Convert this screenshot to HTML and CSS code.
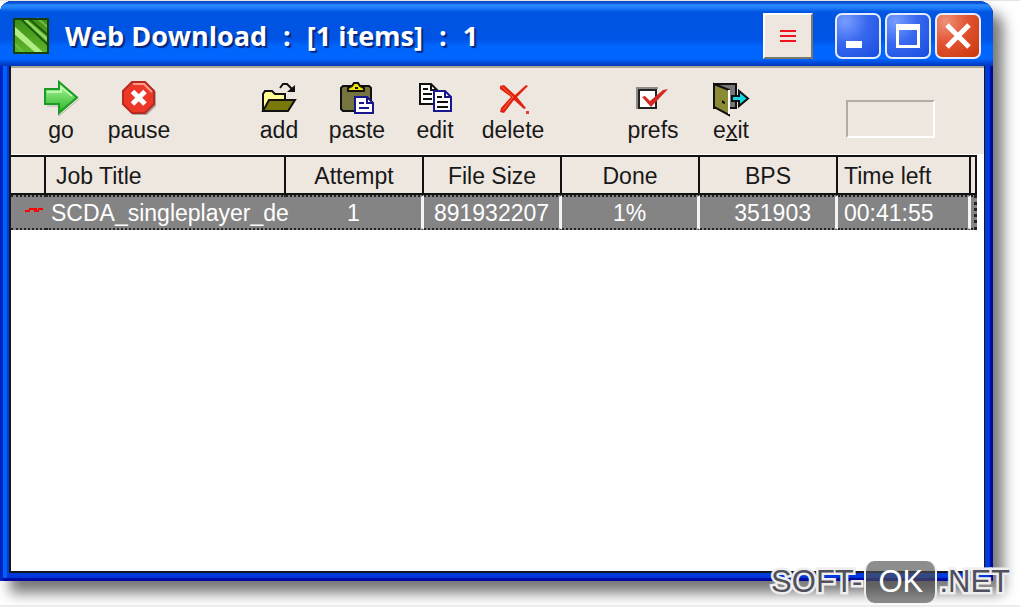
FILE: index.html
```html
<!DOCTYPE html>
<html lang="en">
<head>
<meta charset="utf-8">
<title>Web Download</title>
<link rel="stylesheet" href="styles.css">
</head>

<body>
<main class="window">
    <header class="titlebar">
        <svg class="logo" viewBox="0 0 36 36">
            <defs>
                <linearGradient id="leaf" x2="0" y2="1">
                    <stop offset="0" stop-color="#3c8f17"/>
                    <stop offset="1" stop-color="#5fb52a"/>
                </linearGradient>
            </defs>
            <rect width="36" height="36" fill="url(#leaf)"/>
            <path d="M0 7L32 36H24L0 15Z" fill="#b2ed86"/>
            <path d="M12 0L36 21V25L8 0Z" fill="#8ed860"/>
            <path d="M15 0L36 18M7 0L36 28" stroke="#1d5b08" stroke-width="2"/>
            <path d="M24 0L36 10M0 24L12 36" stroke="#6fbe40" stroke-width="2"/>
            <rect x="1" y="1" width="34" height="34" fill="none" stroke="#163e10" stroke-width="2"/>
        </svg>
        <h1 class="title"><span>Web Download</span> <span>:</span> <span>[1 items]</span> <span>:</span> <span>1</span></h1>
        <button class="menu" aria-label="Menu">
            <svg viewBox="0 0 16 12"><path d="M0 1H16M0 6H16M0 11H16" stroke="#f2141c" stroke-width="2"/></svg>
        </button>
        <div class="controls">
            <button class="control" aria-label="Minimize">
                <svg viewBox="0 0 46 46"><path d="M11 28H27V35H11Z" fill="#fff"/></svg>
            </button>
            <button class="control" aria-label="Maximize">
                <svg viewBox="0 0 46 46"><path d="M11 11H35V35H11ZM14 17V32H32V17Z" fill="#fff" fill-rule="evenodd"/></svg>
            </button>
            <button class="control close" aria-label="Close">
                <svg viewBox="0 0 46 46"><path d="M12 12L34 34M34 12L12 34" stroke="#fff" stroke-width="5"/></svg>
            </button>
        </div>
    </header>

    <section class="content">
        <nav class="toolbar">
            <div class="group">
                <button class="tool">
                    <svg viewBox="0 0 36 36">
                        <defs>
                            <linearGradient id="green" x2="0" y2="1">
                                <stop offset="0" stop-color="#b4f7a4"/>
                                <stop offset="1" stop-color="#25b51e"/>
                            </linearGradient>
                        </defs>
                        <path d="M4 26H16V36L36 19" fill="none" stroke="#b9b5aa" stroke-width="1"/>
                        <path d="M2 9H16V2L34 17.500L16 33V24H2Z" fill="url(#green)" stroke="#199b25" stroke-width="2"/>
                        <path d="M4 12H18V7L29 16" fill="none" stroke="#ccffbd" stroke-width="1.500"/>
                    </svg>
                    go
                </button>
                <button class="tool">
                    <svg viewBox="0 0 36 36">
                        <path d="M12 3H26L35 12V26L26 35H12L3 26V12Z" fill="#aaa59d"/>
                        <path d="M11 2H24L33 11V24L24 33H11L2 24V11Z" fill="#ed3829" stroke="#b62a20" stroke-width="2"/>
                        <path d="M12 4H23L31 12" fill="none" stroke="#ff9b88" stroke-width="2"/>
                        <path d="M11.500 11.500L24 24M24 11.500L11.500 24" stroke="#fff" stroke-width="5"/>
                    </svg>
                    pause
                </button>
            </div>
            <div class="group">
                <button class="tool">
                    <svg viewBox="0 0 36 36">
                        <path d="M2 31V14L4 11H11L14 14H24V19" fill="#fffc91" stroke="#111" stroke-width="2"/>
                        <path d="M2 31L8 20H34L27 31Z" fill="#79780a" stroke="#111" stroke-width="2"/>
                        <path d="M19 8L22 4H26L31 9" fill="none" stroke="#111" stroke-width="2"/>
                        <path d="M34 5V12H26Z" fill="#111"/>
                    </svg>
                    add
                </button>
                <button class="tool">
                    <svg viewBox="0 0 36 36">
                        <path d="M4 6H30L32 8V29L30 31H4L2 29V8Z" fill="#76743f" stroke="#111" stroke-width="2"/>
                        <path d="M9 11V8L13 6L15 3H19L21 6L25 8V11Z" fill="#eee500" stroke="#111" stroke-width="2"/>
                        <path d="M16 8H19" fill="none" stroke="#111" stroke-width="2"/>
                        <path d="M16 17H28L34 23V33H16Z" fill="#fff" stroke="#17178e" stroke-width="2"/>
                        <path d="M28 17V23H34M20 23H25M20 28H30" fill="none" stroke="#17178e" stroke-width="2"/>
                    </svg>
                    paste
                </button>
                <button class="tool">
                    <svg viewBox="0 0 36 36">
                        <path d="M3 4H14L20 10V24H3Z" fill="#fff" stroke="#111" stroke-width="2"/>
                        <path d="M14 4V10H19M6 9H11M6 14H15M6 19H15" fill="none" stroke="#111" stroke-width="2"/>
                        <path d="M17 11H28L34 17V31H17Z" fill="#fff" stroke="#17178e" stroke-width="2"/>
                        <path d="M28 11V17H34" fill="none" stroke="#17178e" stroke-width="2"/>
                        <path d="M20 17H25M20 22H31M20 27H31" stroke="#111" stroke-width="2"/>
                    </svg>
                    edit
                </button>
                <button class="tool">
                    <svg viewBox="0 0 36 36">
                        <path d="M5 6L9 5L20 15L31 5L33 6L22 17L31 28L29 29L19 20L9 33L5 32L6 28L16 17L5 9Z" fill="#e22211"/>
                        <path d="M7 7L18 17L8 30" fill="none" stroke="#fa6b37" stroke-width="1"/>
                        <path d="M31 31H34V34H31Z" fill="#e33c2c"/>
                    </svg>
                    delete
                </button>
            </div>
            <div class="group">
                <button class="tool">
                    <svg viewBox="0 0 36 36">
                        <path d="M2 29V8H23" fill="none" stroke="#8b8a84" stroke-width="2"/>
                        <path d="M4 10H21V28H4Z" fill="#fff" stroke="#222" stroke-width="2"/>
                        <path d="M7 17L10 16L15 21L28 10L33 9L16 27Z" fill="#d42822"/>
                    </svg>
                    prefs
                </button>
                <button class="tool">
                    <svg viewBox="0 0 36 36">
                        <path d="M1 4H23V28H1Z" fill="#777" stroke="#111" stroke-width="2"/>
                        <path d="M1 4L16 10V35L1 27Z" fill="#8c8b35" stroke="#111" stroke-width="2"/>
                        <path d="M16 10V34" stroke="#fff" stroke-width="2"/>
                        <path d="M9 20L12 22V24L9 23Z" fill="#111"/>
                        <path d="M19 16H26V11L35 18.500L26 26V21H19Z" fill="#13d9e2" stroke="#111" stroke-width="2"/>
                    </svg>
                    <span>e<u>x</u>it</span>
                </button>
            </div>
            <div class="meter"></div>
        </nav>

        <table class="jobs">
            <colgroup>
                <col class="col-mark">
                <col>
                <col class="col-data">
                <col class="col-data">
                <col class="col-data">
                <col class="col-data">
                <col class="col-time">
                <col class="col-end">
            </colgroup>
            <thead>
                <tr>
                    <th></th>
                    <th class="left">Job Title</th>
                    <th>Attempt</th>
                    <th>File Size</th>
                    <th>Done</th>
                    <th>BPS</th>
                    <th class="time">Time left</th>
                    <th></th>
                </tr>
            </thead>
            <tbody>
                <tr>
                    <td class="plain"><svg class="mark" viewBox="0 0 18 6"><path d="M0 4H5M4 2H12M9 4H14M13 2H18" stroke="#f00" stroke-width="2"/></svg></td>
                    <td class="plain name">SCDA_singleplayer_de</td>
                    <td>1</td>
                    <td>891932207</td>
                    <td>1%</td>
                    <td class="right">351903</td>
                    <td class="time">00:41:55</td>
                    <td class="plain"></td>
                </tr>
            </tbody>
        </table>
    </section>
</main>

<div class="watermark"><span>SOFT-</span><span class="ok">OK</span><span>.NET</span></div>
</body>
</html>
```

FILE: styles.css
```css
* {
    box-sizing: border-box;
}
body {
    margin: 0;
    min-height: 100vh;
    padding: 0 27px 24px 0;
    display: flex;
    background: #fff;
    border-top: 1px solid #e4e4e4;
    border-bottom: 2px solid #ececec;
    font-family: "Liberation Sans", sans-serif;
    font-size: 23px;
    line-height: 28px;
    color: #181818;
}
button {
    font: inherit;
    color: inherit;
    padding: 0;
    border: 0;
    background: none;
}
svg {
    display: block;
    overflow: visible;
}
.window {
    flex: 1;
    min-width: 0;
    display: flex;
    flex-direction: column;
    padding: 0 8px 8px 9px;
    border-radius: 12px 14px 0 0;
    background: #0039dc;
    box-shadow: inset 3px 0 #0024c4, inset -3px -3px 1px #0009a0, inset 7px 0 1px #0062f6, 10px 12px 14px #777;
}
.titlebar {
    height: 65px;
    margin: 0 -8px 0 -9px;
    padding: 4px 12px 0 13px;
    display: flex;
    align-items: center;
    border-radius: 12px 14px 0 0;
    background: linear-gradient(#0a4fcf 0, #0a4fcf 2px, #2b8cff 4px, #1c7cf8 7px, #0055e2 11px, #0053e4 38px, #0065fc 45px, #0066ff 58px, #0040cc 63px, #0038b8 65px);
}
.logo {
    width: 36px;
    height: 36px;
}
.title {
    flex: 1;
    display: flex;
    gap: 16px;
    margin: 0 0 0 16px;
    font-family: "Open Sans", sans-serif;
    font-size: 27px;
    font-weight: bold;
    line-height: 36px;
    white-space: nowrap;
    color: #fff;
    text-shadow: 2px 2px 1px #08267c;
}
.menu {
    width: 50px;
    height: 46px;
    display: grid;
    place-items: center;
    background: #ede7df;
    border: 2px solid;
    border-color: #fff #77776b #77776b #fff;
}
.menu svg {
    width: 16px;
    height: 12px;
}
.controls {
    display: flex;
    gap: 4px;
    margin-left: 22px;
}
.control {
    width: 46px;
    height: 46px;
    border: 2px solid #e4edff;
    border-radius: 7px;
    background: radial-gradient(circle at 20% 15%, #799dff, #3868ee 45%, #194ce0);
}
.control svg {
    margin: -2px;
    width: 46px;
    height: 46px;
}
.close {
    background: radial-gradient(circle at 20% 15%, #ee9278, #e15331 45%, #c93609);
}
.content {
    flex: 1;
    background: #fff;
    border: solid #17171f;
    border-width: 0 1px 2px 2px;
}
.toolbar {
    height: 89px;
    padding: 12px 10px 0 11px;
    display: flex;
    gap: 62px;
    background: #eee7df;
    border-top: 2px solid #aaa797;
    border-bottom: 1px solid #fff;
}
.group {
    display: flex;
}
.tool {
    width: 78px;
    height: 68px;
    display: flex;
    flex-direction: column;
    align-items: center;
}
.tool svg {
    width: 36px;
    height: 36px;
}
.tool u {
    text-decoration-thickness: 2px;
}
.meter {
    width: 89px;
    height: 38px;
    margin: 20px 0 0 14px;
    border: 2px solid;
    border-color: #b0aca3 #fff #fff #b0aca3;
}
.jobs {
    width: calc(100% - 7px);
    table-layout: fixed;
    border-collapse: separate;
    border-spacing: 0;
}
.col-mark {
    width: 35px;
}
.col-data {
    width: 138px;
}
.col-time {
    width: 133px;
}
.col-end {
    width: 6px;
}
.jobs th,
.jobs td {
    padding: 0;
    white-space: nowrap;
    text-align: center;
    font-weight: normal;
}
.jobs th {
    height: 40px;
    padding-top: 2px;
    background: #eee7df;
    border: solid #111;
    border-width: 2px 2px 2px 0;
}
.jobs td {
    height: 35px;
    color: #fff;
    background: #848484;
    border-top: 2px dotted #222;
    border-bottom: 2px dotted #222;
    border-right: 3px solid #f4f4f4;
}
.jobs td.plain {
    border-right: 0;
}
.jobs td.plain:last-child {
    border-right: 3px dotted #222;
}
.jobs .left {
    padding-left: 10px;
    text-align: left;
}
.jobs .name {
    padding-left: 5px;
    text-align: left;
}
.jobs .right {
    padding-right: 24px;
    text-align: right;
}
.jobs .time {
    padding-left: 6px;
    text-align: left;
}
.mark {
    width: 18px;
    height: 6px;
    margin: 0 0 6px 14px;
}
/* site badge laid over the corner of the window */
.watermark {
    position: absolute;
    right: 10px;
    bottom: 4px;
    display: flex;
    align-items: center;
    gap: 2px;
    font-family: "Liberation Sans", sans-serif;
    font-size: 31px;
    line-height: 42px;
    color: #50515c;
    -webkit-text-stroke: 5px #eee;
    paint-order: stroke fill;
}
.ok {
    width: 73px;
    height: 42px;
    text-align: center;
    color: #fff;
    -webkit-text-stroke: 0;
    background: rgba(80, 80, 80, .65);
    border: 2px solid #eee;
    border-width: 0 2px;
    border-radius: 10px;
}
```
